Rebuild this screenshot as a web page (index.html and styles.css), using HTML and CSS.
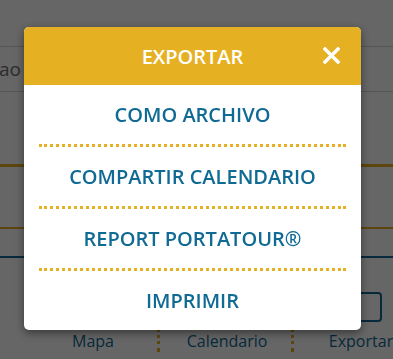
FILE: index.html
```html
<!DOCTYPE html>
<html>
<head>
    <meta charset="UTF-8">
    <title>Exportar</title>
    <link rel="stylesheet" href="styles.css">
</head>
<body>
<div id="page">
    <div class="search"><span>ao</span></div>
    <div class="rule gold thick"></div>
    <div class="rule gold"></div>
    <div class="rule blue"></div>
    <div class="tabs">
        <div class="tab">
            <div class="tabBtn"></div>
            <p>Mapa</p>
        </div>
        <div class="tab">
            <div class="tabBtn"></div>
            <p>Calendario</p>
        </div>
        <div class="tab">
            <div class="tabBtn"></div>
            <p>Exportar</p>
        </div>
    </div>
</div>

<div class="mask"></div>

<div class="modal">
    <div class="head">
        <h2>EXPORTAR</h2>
        <span class="close">
            <svg width="17" height="17" viewBox="0 0 17 17"><path d="M2 2L15 15M15 2L2 15" stroke="#fff" stroke-width="3.4" stroke-linecap="square"/></svg>
        </span>
    </div>
    <ul class="list">
        <li>COMO ARCHIVO</li>
        <li>COMPARTIR CALENDARIO</li>
        <li>REPORT PORTATOUR®</li>
        <li>IMPRIMIR</li>
    </ul>
</div>
</body>
</html>
```

FILE: styles.css
```css
body,p,h2,ul,li{margin:0;padding:0;list-style:none;}
body{
    width: 393px;
    height: 359px;
    overflow: hidden;
    background-color: #fff;
    font-family: "Open Sans","Noto Sans",sans-serif;
}

#page{
    display: flex;
    flex-direction: column;
    height: 359px;
    padding-top: 46px;
    box-sizing: border-box;
    overflow: hidden;
}
#page .search{
    height: 44px;
    border-top: 1px solid #d4d4d4;
    border-bottom: 1px solid #d4d4d4;
    font-size: 19px;
    line-height: 44px;
    color: #707070;
    margin-left: -1px;
}
#page .rule{
    height: 2px;
}
#page .rule.gold{
    background-color: #e5b022;
    margin-top: 60px;
}
#page .rule.thick{
    height: 3px;
    margin-top: 72px;
}
#page .rule.blue{
    background-color: #0f6a94;
    margin-top: 27px;
}
#page .tabs{
    display: flex;
    margin: 34px 0 0 26px;
}
#page .tab{
    flex: 0 0 134px;
    display: flex;
    flex-direction: column;
    align-items: center;
}
#page .tab + .tab{
    border-left: 3px dotted #e5b022;
    margin-left: -3px;
}
#page .tabBtn{
    width: 38px;
    height: 26px;
    border: 2px solid #0f6a94;
    border-radius: 4px;
}
#page .tab p{
    margin-top: 8px;
    font-size: 16px;
    color: #0f6a94;
}

.mask{
    position: fixed;
    left: 0;
    top: 0;
    width: 100%;
    height: 100%;
    background-color: rgba(0,0,0,.6);
}

.modal{
    position: absolute;
    left: 24px;
    top: 27px;
    width: 337px;
    background-color: #fff;
    border-radius: 5px;
    overflow: hidden;
    box-shadow: 0 3px 8px rgba(0,0,0,.45);
}
.modal .head{
    position: relative;
    height: 58px;
    background-color: #e5b022;
    display: flex;
    align-items: center;
    justify-content: center;
}
.modal .head h2{
    font-size: 20px;
    font-weight: 600;
    color: #fff;
}
.modal .close{
    position: absolute;
    right: 21px;
    top: 20px;
    width: 17px;
    height: 17px;
}
.modal .close svg{
    display: block;
}
.modal .list{
    padding: 0 15px;
}
.modal .list li{
    height: 59px;
    line-height: 59px;
    text-align: center;
    font-size: 20px;
    font-weight: 600;
    color: #0f6a94;
}
.modal .list li + li{
    border-top: 3px dotted #e5b022;
}
```
